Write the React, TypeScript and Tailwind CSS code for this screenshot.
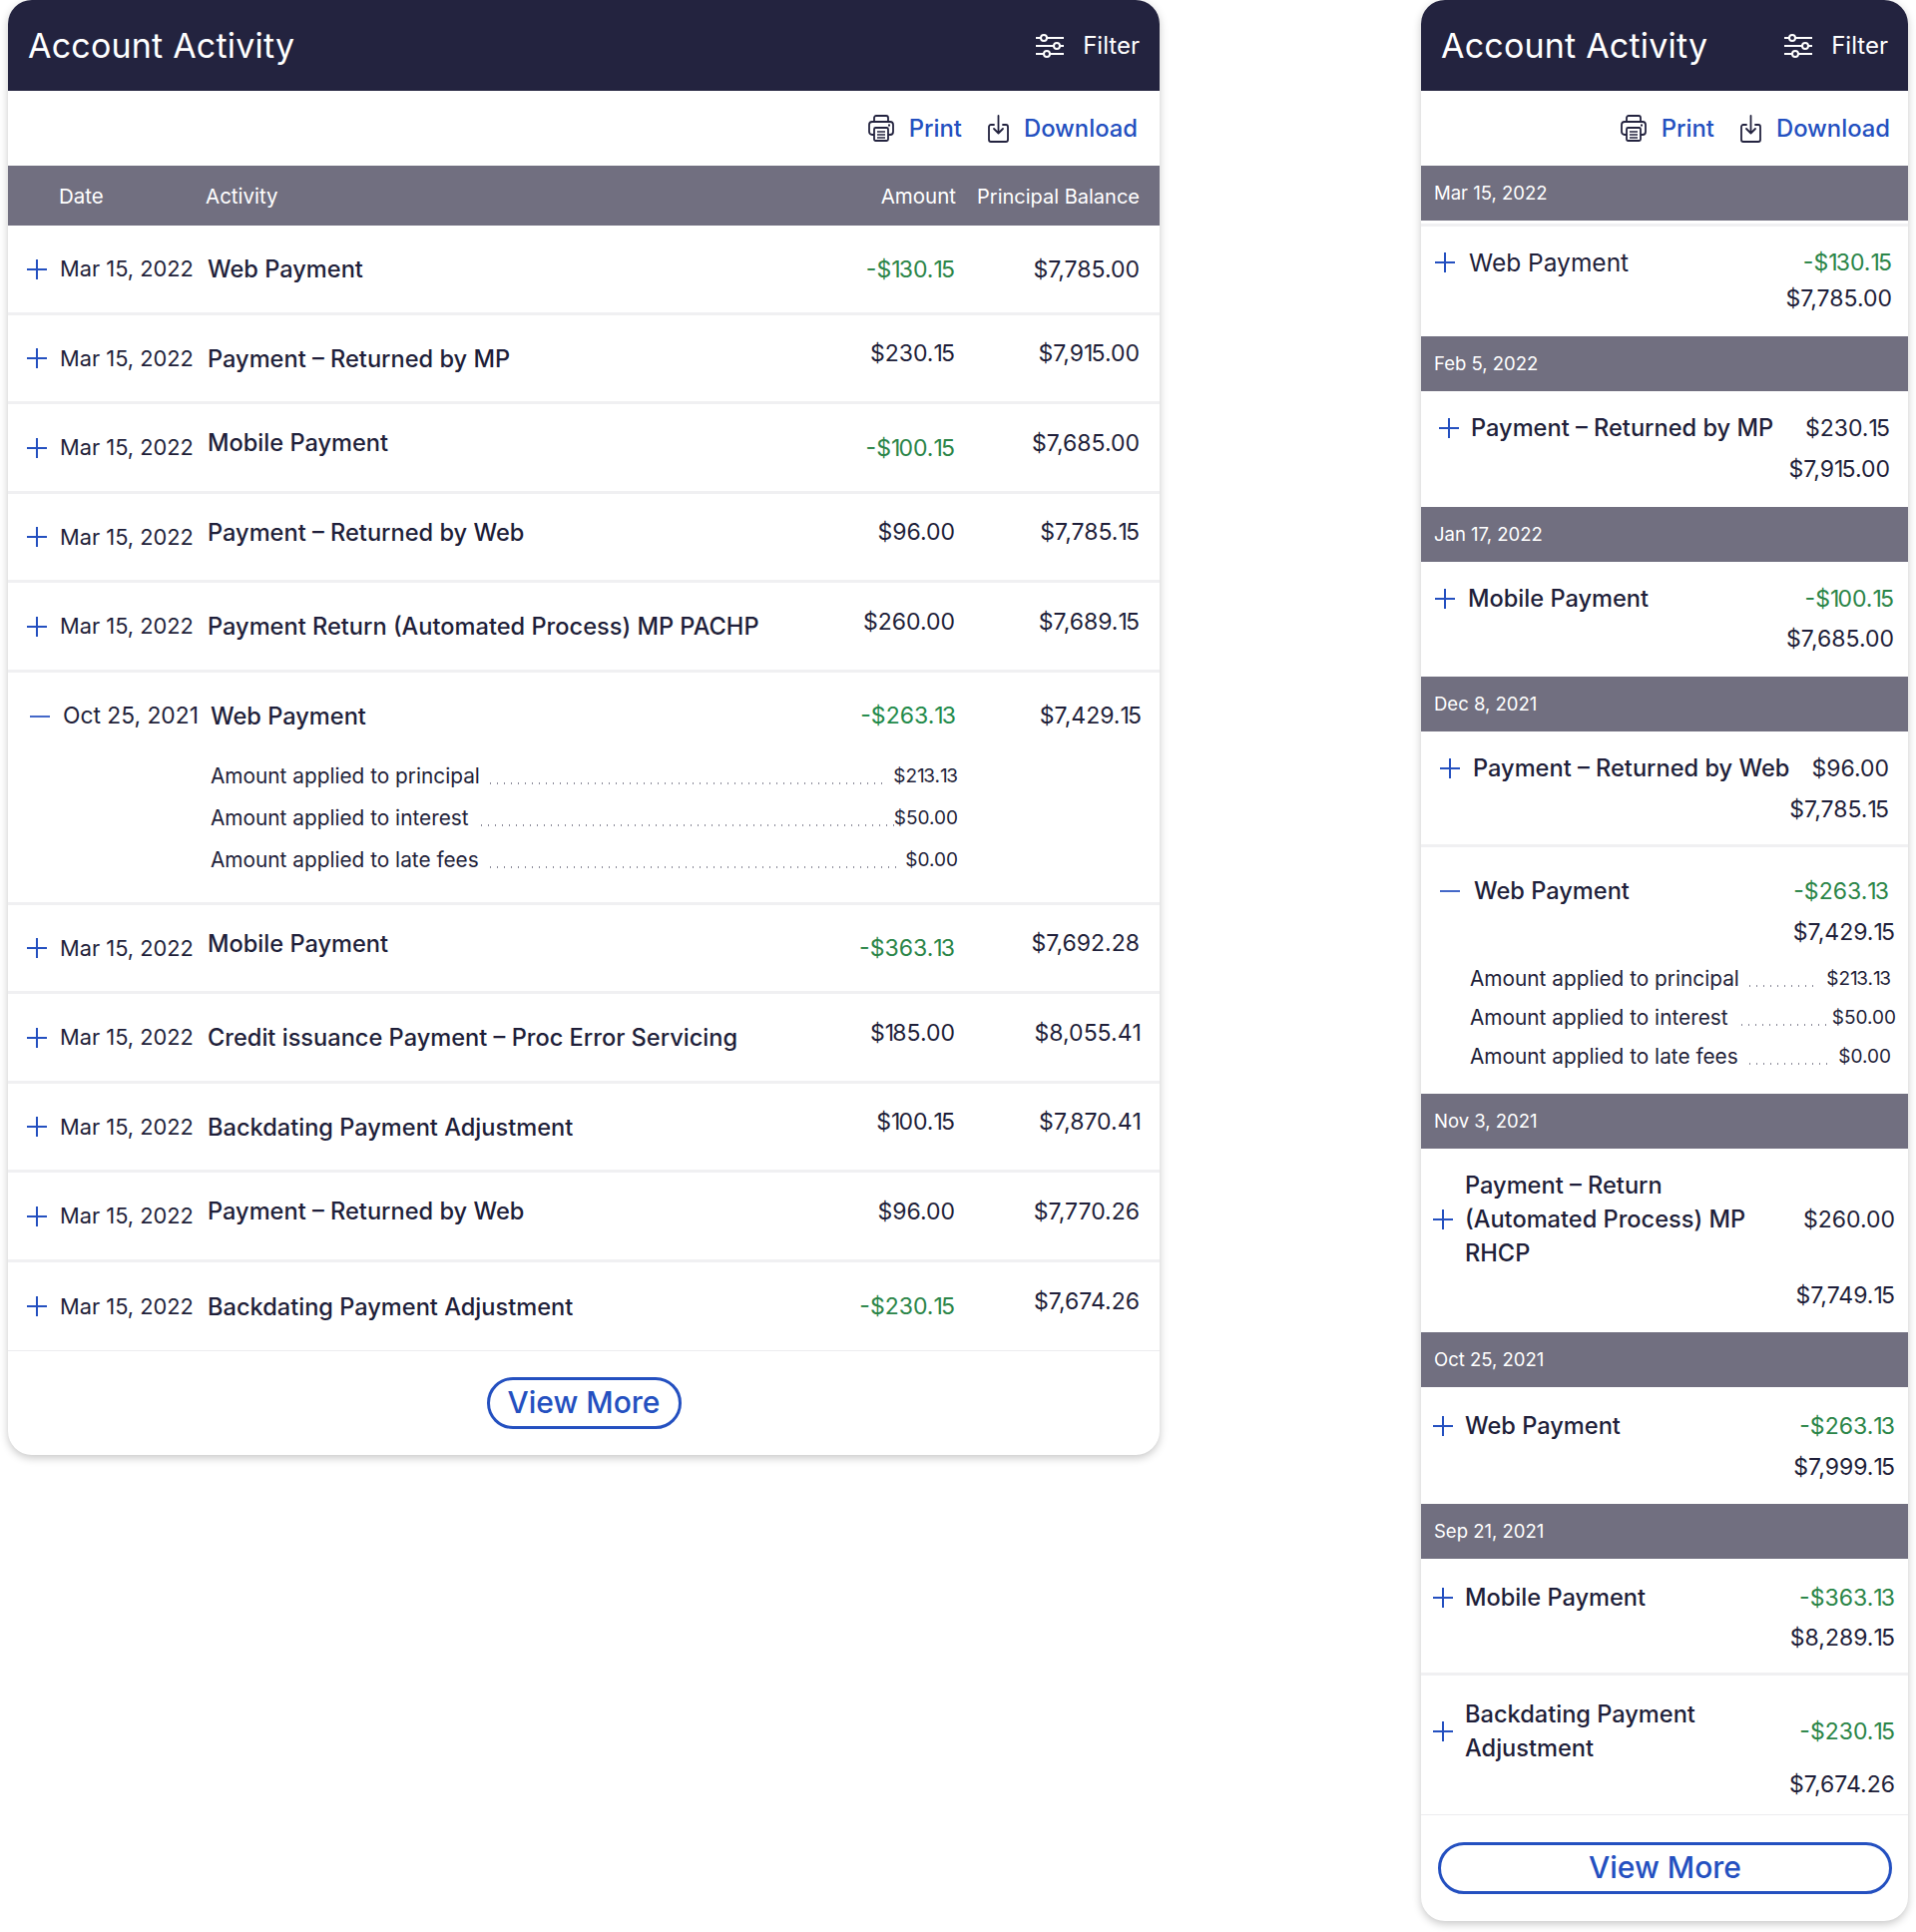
import React from 'react';

const font = { fontFamily: 'Inter, "Noto Sans", sans-serif' };

function FilterIcon() {
  return (
    <svg width="30" height="24" viewBox="0 0 30 24" fill="none" stroke="white" strokeWidth="2">
      <path d="M1 4h5M12 4h17M1 12h18M25 12h4M1 20h8M15 20h14" />
      <circle cx="9" cy="4" r="3" />
      <circle cx="22" cy="12" r="3" />
      <circle cx="12" cy="20" r="3" />
    </svg>
  );
}

function PrintIcon() {
  return (
    <svg width="26" height="27" viewBox="0 0 26 27" fill="none" stroke="#23233f" strokeWidth="1.800" strokeLinejoin="round">
      <path d="M6 7V3a2 2 0 0 1 2-2h10a2 2 0 0 1 2 2v4" />
      <path d="M6 20H4a3 3 0 0 1-3-3v-7a3 3 0 0 1 3-3h18a3 3 0 0 1 3 3v7a3 3 0 0 1-3 3h-2" />
      <rect x="6" y="13" width="14" height="13" rx="1.5" />
      <path d="M9 17h8M9 20h8M9 23h8" strokeWidth="1.5" />
      <path d="M20 10.5h2" />
    </svg>
  );
}

function DownloadIcon() {
  return (
    <svg width="21" height="28" viewBox="0 0 21 28" fill="none" stroke="#23233f" strokeWidth="1.800" strokeLinejoin="round" strokeLinecap="round">
      <path d="M6 10H3a2 2 0 0 0-2 2v13a2 2 0 0 0 2 2h15a2 2 0 0 0 2-2V12a2 2 0 0 0-2-2h-3" />
      <path d="M10.500 1v17M6 14l4.500 4.500L15 14" />
    </svg>
  );
}

function Plus() {
  return (
    <svg width="20" height="20" viewBox="0 0 20 20" stroke="#2450c0" strokeWidth="2" className="shrink-0">
      <path d="M0 10h20M10 0v20" />
    </svg>
  );
}

function Minus() {
  return (
    <svg width="20" height="20" viewBox="0 0 20 20" stroke="#4468c8" strokeWidth="2" className="shrink-0">
      <path d="M0 10h20" />
    </svg>
  );
}

// the 1s in the picture's typeface are much narrower than Inter's
function Money({ value }: { value: string }) {
  return (
    <>
      {value.split('').map((ch, i) =>
        ch === '1' ? (
          <span key={i} className="tracking-[-0.08em]">1</span>
        ) : (
          <span key={i}>{ch}</span>
        )
      )}
    </>
  );
}

function Dots({ className }: { className: string }) {
  return (
    <div className={`h-[2px] self-end mb-[6px] bg-[radial-gradient(circle,#8b8b99_1px,transparent_1px)] bg-[length:7px_2px] ${className}`} />
  );
}

function CardHeader() {
  return (
    <div className="h-[91px] bg-[#23233f] rounded-t-[24px] flex items-center justify-between pl-[20px] pr-[20px] pt-[1px]">
      <h2 className="text-[34px] text-white tracking-[0.2px] leading-none">Account Activity</h2>
      <div className="flex items-center gap-[18px] text-[24px] text-white">
        <FilterIcon />
        <span>Filter</span>
      </div>
    </div>
  );
}

function Toolbar({ rightClass }: { rightClass: string }) {
  return (
    <div className={`h-[75px] flex items-center justify-end text-[23.800px] font-medium text-[#2450c0] ${rightClass}`}>
      <PrintIcon />
      <span className="ml-[15px]">Print</span>
      <div className="ml-[26px]"><DownloadIcon /></div>
      <span className="ml-[15px]">Download</span>
    </div>
  );
}

const desktopRows = [
  { name: 'Web Payment', amount: '-$130.15', balance: '$7,785.00', green: true, up: '' },
  { name: 'Payment – Returned by MP', amount: '$230.15', balance: '$7,915.00', green: false, up: 'ab' },
  { name: 'Mobile Payment', amount: '-$100.15', balance: '$7,685.00', green: true, up: 'nb' },
  { name: 'Payment – Returned by Web', amount: '$96.00', balance: '$7,785.15', green: false, up: 'nab' },
  { name: 'Payment Return (Automated Process) MP PACHP', amount: '$260.00', balance: '$7,689.15', green: false, up: 'ab' },
  { name: 'Mobile Payment', amount: '-$363.13', balance: '$7,692.28', green: true, up: 'nb' },
  { name: 'Credit issuance Payment – Proc Error Servicing', amount: '$185.00', balance: '$8,055.41', green: false, up: 'ab' },
  { name: 'Backdating Payment Adjustment', amount: '$100.15', balance: '$7,870.41', green: false, up: 'ab' },
  { name: 'Payment – Returned by Web', amount: '$96.00', balance: '$7,770.26', green: false, up: 'nab' },
  { name: 'Backdating Payment Adjustment', amount: '-$230.15', balance: '$7,674.26', green: true, up: 'b' },
];

function DesktopRow({ row, last }: { row: (typeof desktopRows)[number]; last?: boolean }) {
  return (
    <div className={`h-[89.5px] flex items-center pl-[19px] pr-[20px] pt-[1px] text-[23px] text-[#1f1f3a] ${last ? 'border-b border-[#ececef]' : 'border-b-[3px] border-[#f0f0f2]'}`}>
      <Plus />
      <span className="w-[161px] pl-[13px] shrink-0 whitespace-nowrap text-[21.800px]">Mar 15, 2022</span>
      <span className={`flex-1 font-medium text-[23.600px] whitespace-nowrap ${row.up.includes('n') ? 'mb-[10px]' : ''}`}>{row.name}</span>
      <span className={`${row.green ? 'text-[#2b8548]' : ''} ${row.up.includes('a') ? 'mb-[10px]' : ''}`}><Money value={row.amount} /></span>
      <span className={`w-[185px] text-right ${row.up.includes('b') ? 'mb-[10px]' : ''}`}><Money value={row.balance} /></span>
    </div>
  );
}

function ExpandedDesktopRow() {
  return (
    <div className="h-[233px] border-b-[3px] border-[#f0f0f2] pt-[30px] pl-[22px] pr-[18px] text-[#1f1f3a]">
      <div className="h-[28px] flex items-center text-[23px]">
        <Minus />
        <span className="w-[161px] pl-[13px] shrink-0 whitespace-nowrap text-[22.800px]">Oct 25, 2021</span>
        <span className="flex-1 font-medium text-[23.600px]">Web Payment</span>
        <span className="text-[#1f8a4a]"><Money value="-$263.13" /></span>
        <span className="w-[186px] text-right"><Money value="$7,429.15" /></span>
      </div>
      <div className="mt-[32px] ml-[181px] mr-[184px] flex flex-col gap-[14px] text-[20.800px] leading-[28px]">
        <div className="flex">
          <span>Amount applied to principal</span>
          <Dots className="flex-1 mx-[7px]" />
          <span className="text-[19px]"><Money value="$213.13" /></span>
        </div>
        <div className="flex">
          <span>Amount applied to interest</span>
          <Dots className="flex-1 ml-[9px]" />
          <span className="text-[19px]"><Money value="$50.00" /></span>
        </div>
        <div className="flex">
          <span>Amount applied to late fees</span>
          <Dots className="flex-1 mx-[8px]" />
          <span className="text-[19px]"><Money value="$0.00" /></span>
        </div>
      </div>
    </div>
  );
}

function DesktopCard() {
  return (
    <div className="w-[1154px] h-[1458px] shrink-0 bg-white rounded-[24px] shadow-[0_3px_8px_rgba(0,0,0,0.22)]">
      <CardHeader />
      <Toolbar rightClass="pr-[22px]" />
      <div className="h-[60px] bg-[#716f80] flex items-center pl-[51px] pr-[20px] pt-[2px] text-[20.500px] text-white">
        <span className="w-[147px]">Date</span>
        <span className="flex-1">Activity</span>
        <span className="mr-[21px]">Amount</span>
        <span className="text-[20px]">Principal Balance</span>
      </div>
      {desktopRows.slice(0, 5).map((row, i) => (
        <DesktopRow key={i} row={row} />
      ))}
      <ExpandedDesktopRow />
      {desktopRows.slice(5).map((row, i) => (
        <DesktopRow key={i} row={row} last={i === 4} />
      ))}
      <div className="flex justify-center pt-[26px]">
        <button className="w-[195px] h-[52px] pb-[2px] rounded-full border-[3px] border-[#2450c0] text-[30px] font-medium text-[#2450c0] flex items-center justify-center">
          View More
        </button>
      </div>
    </div>
  );
}

function Band({ date }: { date: string }) {
  return (
    <div className="h-[55px] bg-[#716f80] flex items-center pl-[13px] pt-[1px] text-[18.500px] text-white">{date}</div>
  );
}

type MobileRowProps = {
  name: React.ReactNode;
  amount: string;
  balance: string;
  green?: boolean;
  rowClass: string;
  iconMinus?: boolean;
  gapClass: string;
  balanceClass: string;
  children?: React.ReactNode;
};

function MobileRow({ name, amount, balance, green, rowClass, iconMinus, gapClass, balanceClass, children }: MobileRowProps) {
  return (
    <div className={`text-[23px] leading-[28px] text-[#1f1f3a] ${rowClass}`}>
      <div className="flex items-center h-[28px]">
        {iconMinus ? <Minus /> : <Plus />}
        <div className={`flex-1 font-medium text-[23.600px] ${gapClass}`}>{name}</div>
        <span className={green ? 'text-[#2b8548]' : ''}><Money value={amount} /></span>
      </div>
      <div className={`text-right ${balanceClass}`}><Money value={balance} /></div>
      {children}
    </div>
  );
}

function MobileCard() {
  return (
    <div className="w-[488px] h-[1925px] shrink-0 bg-white rounded-[24px] shadow-[0_3px_8px_rgba(0,0,0,0.22)]">
      <CardHeader />
      <Toolbar rightClass="pr-[18px]" />
      <Band date="Mar 15, 2022" />
      <div className="h-[116px] border-t-[3px] border-[#f0f0f2] mt-[3px] -mb-[3px] pt-[22px] pl-[14px] pr-[16px] text-[23px] leading-[28px] text-[#1f1f3a]">
        <div className="flex items-center h-[28px]">
          <Plus />
          <div className="flex-1 ml-[14px] text-[24.500px]">Web Payment</div>
          <span className="text-[#2b8548]"><Money value="-$130.15" /></span>
        </div>
        <div className="text-right mt-[8px]"><Money value="$7,785.00" /></div>
      </div>
      <Band date="Feb 5, 2022" />
      <MobileRow name="Payment – Returned by MP" amount="$230.15" balance="$7,915.00" rowClass="h-[116px] pt-[23px] pl-[18px] pr-[18px]" gapClass="ml-[12px]" balanceClass="mt-[13px]" />
      <Band date="Jan 17, 2022" />
      <MobileRow name="Mobile Payment" amount="-$100.15" balance="$7,685.00" rowClass="h-[115px] pt-[23px] pl-[14px] pr-[14px]" gapClass="ml-[13px]" balanceClass="mt-[12px]" green />
      <Band date="Dec 8, 2021" />
      <MobileRow name="Payment – Returned by Web" amount="$96.00" balance="$7,785.15" rowClass="h-[116px] pt-[23px] pl-[19px] pr-[19px] border-b-[3px] border-[#f0f0f2]" gapClass="ml-[13px]" balanceClass="mt-[13px]" />
      <MobileRow name="Web Payment" amount="-$263.13" balance="$7,429.15" rowClass="h-[247px] pt-[30px] pl-[19px] pr-[19px]" gapClass="ml-[14px]" balanceClass="mt-[13px] -mr-[6px]" iconMinus green>
        <div className="mt-[19px] ml-[30px] mr-[-7px] flex flex-col gap-[11px] text-[20.800px] leading-[28px] font-normal">
          <div className="flex pr-[5px]">
            <span>Amount applied to principal</span>
            <Dots className="flex-1 ml-[7px] mr-[7px]" />
            <span className="text-[19px]"><Money value="$213.13" /></span>
          </div>
          <div className="flex">
            <span>Amount applied to interest</span>
            <Dots className="flex-1 ml-[10px] mr-[5px]" />
            <span className="text-[19px]"><Money value="$50.00" /></span>
          </div>
          <div className="flex pr-[5px]">
            <span>Amount applied to late fees</span>
            <Dots className="flex-1 ml-[8px] mr-[6px]" />
            <span className="text-[19px]"><Money value="$0.00" /></span>
          </div>
        </div>
      </MobileRow>
      <Band date="Nov 3, 2021" />
      <div className="h-[184px] pt-[20px] pl-[12px] pr-[13px] text-[23px] leading-[34px] text-[#1f1f3a]">
        <div className="flex items-center">
          <Plus />
          <div className="flex-1 ml-[12px] font-medium text-[23.600px]">
            Payment – Return<br />(Automated Process) MP<br />RHCP
          </div>
          <span><Money value="$260.00" /></span>
        </div>
        <div className="text-right mt-[8px]"><Money value="$7,749.15" /></div>
      </div>
      <Band date="Oct 25, 2021" />
      <MobileRow name="Web Payment" amount="-$263.13" balance="$7,999.15" rowClass="h-[117px] pt-[25px] pl-[12px] pr-[13px]" gapClass="ml-[12px]" balanceClass="mt-[13px]" green />
      <Band date="Sep 21, 2021" />
      <MobileRow name="Mobile Payment" amount="-$363.13" balance="$8,289.15" rowClass="h-[117px] pt-[25px] pl-[12px] pr-[13px] border-b-[3px] border-[#f0f0f2]" gapClass="ml-[12px]" balanceClass="mt-[12px]" green />
      <div className="h-[140px] pt-[22px] pl-[12px] pr-[13px] text-[23px] leading-[34px] text-[#1f1f3a] border-b border-[#ececef]">
        <div className="flex items-center">
          <Plus />
          <div className="flex-1 ml-[12px] font-medium text-[23.600px]">
            Backdating Payment<br />Adjustment
          </div>
          <span className="text-[#2b8548]"><Money value="-$230.15" /></span>
        </div>
        <div className="text-right mt-[2px]"><Money value="$7,674.26" /></div>
      </div>
      <div className="pt-[27px] px-[17px]">
        <button className="w-[455px] h-[52px] pb-[2px] rounded-full border-[3px] border-[#2450c0] text-[30px] font-medium text-[#2450c0] flex items-center justify-center">
          View More
        </button>
      </div>
    </div>
  );
}

export default function App() {
  return (
    <div className="w-[1920px] h-[1936px] bg-white flex items-start pl-[8px] gap-[262px]" style={font}>
      <DesktopCard />
      <MobileCard />
    </div>
  );
}
